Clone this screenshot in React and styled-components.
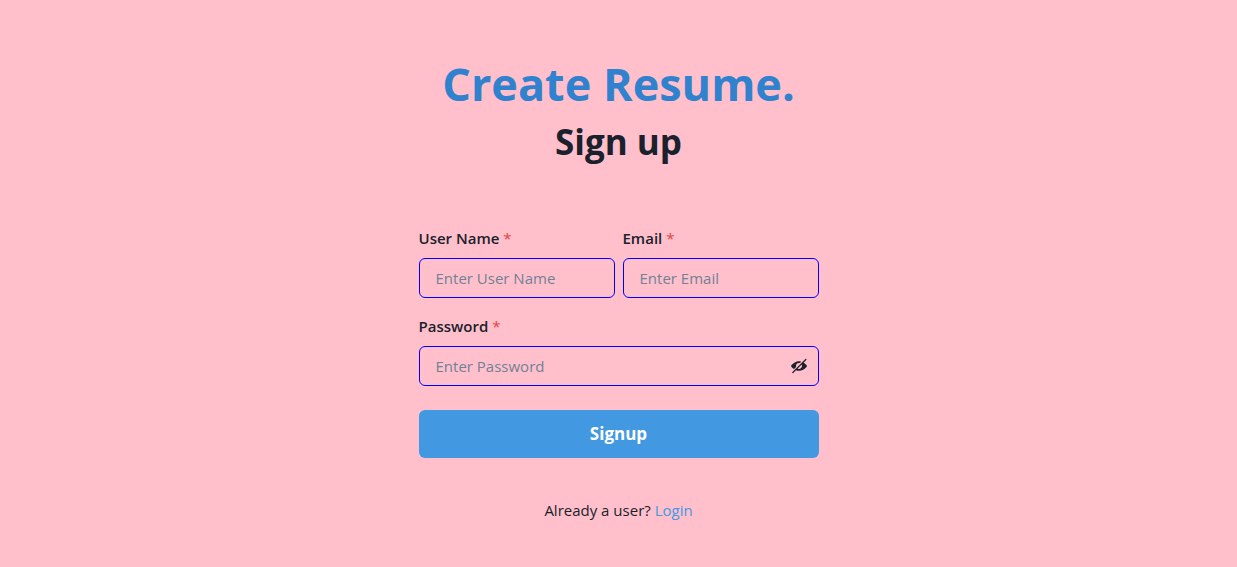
import React, { useState } from "react";
import styled, { createGlobalStyle } from "styled-components";

const GlobalStyle = createGlobalStyle`
  *, *::before, *::after { box-sizing: border-box; }
  body {
    margin: 0;
    background: #ffc0cb;
    color: #1a202c;
    font-family: "Open Sans", "Noto Sans", sans-serif;
    font-size: 15px;
    line-height: 24px;
  }
  h1, h2, p { margin: 0; }
`;

const Page = styled.main`
  display: flex;
  flex-direction: column;
  align-items: center;
  padding: 48px 24px 40px;
`;

const Header = styled.header`
  text-align: center;
  margin-bottom: 62px;
`;

const Brand = styled.h1`
  color: #3182ce;
  font-size: 45px;
  line-height: 72px;
  font-weight: 700;
`;

const Title = styled.h2`
  font-size: 35px;
  line-height: 44px;
  font-weight: 700;
`;

const Form = styled.form`
  display: flex;
  flex-direction: column;
  gap: 16px;
  width: 100%;
  max-width: 400px;
`;

const FieldRow = styled.div`
  display: grid;
  grid-template-columns: 1fr 1fr;
  gap: 8px;
`;

const Field = styled.div`
  display: flex;
  flex-direction: column;
  gap: 8px;
  min-width: 0;
`;

const Label = styled.label`
  font-size: 15px;
  font-weight: 600;
`;

const Required = styled.span`
  color: #e53e3e;
  margin-left: 4px;
  font-weight: 400;
`;

const InputBox = styled.div`
  display: flex;
  align-items: center;
  height: 40px;
  border: 1px solid #0000ff;
  border-radius: 6px;
`;

const Input = styled.input`
  flex: 1;
  min-width: 0;
  height: 100%;
  padding: 0 16px;
  border: 0;
  outline: 0;
  background: transparent;
  color: inherit;
  font: inherit;
  &::placeholder { color: #718096; opacity: 1; }
`;

const IconButton = styled.button`
  display: flex;
  align-items: center;
  justify-content: center;
  width: 38px;
  height: 100%;
  padding: 0;
  border: 0;
  background: transparent;
  color: inherit;
  cursor: pointer;
`;

const SubmitButton = styled.button`
  height: 48px;
  margin-top: 8px;
  border: 0;
  border-radius: 6px;
  background: #4299e1;
  color: #ffffff;
  font: inherit;
  font-size: 17px;
  font-weight: 700;
  cursor: pointer;
`;

const Footer = styled.p`
  margin-top: 40px;
`;

const Link = styled.a`
  color: #4299e1;
  text-decoration: none;
`;

const ViewOffIcon = () => (
  <svg width="16" height="16" viewBox="0 0 24 24" fill="currentColor" aria-hidden="true">
    <path d="M23.2,10.549a20.954,20.954,0,0,0-4.3-3.6l4-3.995a1,1,0,1,0-1.414-1.414l-.018.018a.737.737,0,0,1-.173.291l-19.5,19.5c-.008.007-.018.009-.026.017a1,1,0,0,0,1.631,1.088l4.146-4.146a11.26,11.26,0,0,0,4.31.939h.3c4.256,0,8.489-2.984,11.051-5.8A2.171,2.171,0,0,0,23.2,10.549ZM16.313,13.27a4.581,4.581,0,0,1-3,3.028,4.3,4.3,0,0,1-3.1-.19.253.253,0,0,1-.068-.407l5.56-5.559a.252.252,0,0,1,.407.067A4.3,4.3,0,0,1,16.313,13.27Z" />
    <path d="M7.615,13.4a.244.244,0,0,0,.061-.24A4.315,4.315,0,0,1,7.5,12,4.5,4.5,0,0,1,12,7.5a4.276,4.276,0,0,1,1.16.173.244.244,0,0,0,.24-.062l1.941-1.942a.254.254,0,0,0-.1-.421A10.413,10.413,0,0,0,12,4.75C7.7,4.692,3.4,7.7.813,10.549a2.15,2.15,0,0,0-.007,2.9,21.209,21.209,0,0,0,3.438,3.03.256.256,0,0,0,.326-.029Z" />
  </svg>
);

const ViewIcon = () => (
  <svg width="16" height="16" viewBox="0 0 24 24" fill="currentColor" aria-hidden="true">
    <path d="M23.4 10.9C21 7.700 16.800 4.800 12 4.800S3 7.700.6 10.900a1.800 1.800 0 0 0 0 2.200C3 16.300 7.200 19.200 12 19.200s9-2.900 11.400-6.100a1.800 1.800 0 0 0 0-2.200ZM12 16.500a4.500 4.500 0 1 1 0-9 4.500 4.500 0 0 1 0 9Z" />
  </svg>
);

const RequiredLabel = ({ htmlFor, children }) => (
  <Label htmlFor={htmlFor}>
    {children}
    <Required aria-hidden="true">*</Required>
  </Label>
);

export default function App() {
  const [visible, setVisible] = useState(false);

  return (
    <>
      <GlobalStyle />
      <Page>
        <Header>
          <Brand>Create Resume.</Brand>
          <Title>Sign up</Title>
        </Header>
        <Form onSubmit={(event) => event.preventDefault()}>
          <FieldRow>
            <Field>
              <RequiredLabel htmlFor="username">User Name</RequiredLabel>
              <InputBox>
                <Input id="username" type="text" placeholder="Enter User Name" required />
              </InputBox>
            </Field>
            <Field>
              <RequiredLabel htmlFor="email">Email</RequiredLabel>
              <InputBox>
                <Input id="email" type="email" placeholder="Enter Email" required />
              </InputBox>
            </Field>
          </FieldRow>
          <Field>
            <RequiredLabel htmlFor="password">Password</RequiredLabel>
            <InputBox>
              <Input
                id="password"
                type={visible ? "text" : "password"}
                placeholder="Enter Password"
                required
              />
              <IconButton
                type="button"
                aria-label={visible ? "Hide password" : "Show password"}
                onClick={() => setVisible(!visible)}
              >
                {visible ? <ViewIcon /> : <ViewOffIcon />}
              </IconButton>
            </InputBox>
          </Field>
          <SubmitButton type="submit">Signup</SubmitButton>
        </Form>
        <Footer>
          Already a user? <Link href="#login">Login</Link>
        </Footer>
      </Page>
    </>
  );
}
